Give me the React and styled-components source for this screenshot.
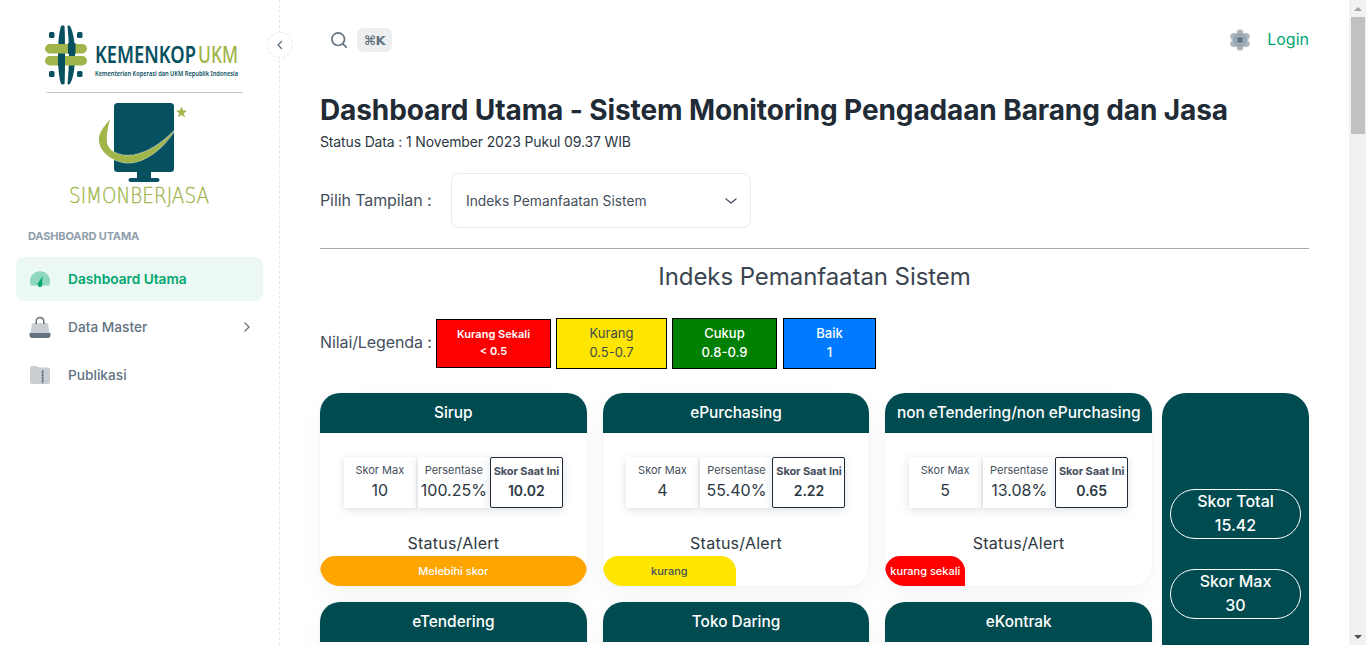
import React from "react";
import styled, { createGlobalStyle } from "styled-components";

const Global = createGlobalStyle`
  html, body { margin: 0; padding: 0; height: 100%; overflow: hidden; background: #fff; }
  body { font-family: Inter, "Noto Sans", "Liberation Sans", sans-serif; color: #212b36; }
  * { box-sizing: border-box; }
`;

const Shell = styled.div`
  height: 100vh;
  display: flex;
  overflow: hidden;
`;

const Page = styled.div`
  flex: 1;
  min-width: 0;
  display: flex;
  align-items: stretch;
  overflow: hidden;
`;

const Rail = styled.div`
  flex: 0 0 17px;
  background: #f1f1f1;
  display: flex;
  flex-direction: column;
  align-items: center;
`;

const RailButton = styled.div`
  flex: none;
  width: 17px;
  height: 17px;
  display: flex;
  align-items: center;
  justify-content: center;
`;

const RailArrow = styled.span`
  width: 0;
  height: 0;
  border-left: 4px solid transparent;
  border-right: 4px solid transparent;
  ${(p) => (p.$down ? "border-top: 4px solid #505050;" : "border-bottom: 4px solid #a3a3a3;")}
`;

const RailThumb = styled.div`
  flex: none;
  width: 14px;
  height: 117px;
  margin-left: 1px;
  background: #c1c1c1;
`;

const RailGap = styled.div`
  flex: 1;
`;

const Sidebar = styled.aside`
  position: relative;
  flex: 0 0 280px;
  border-right: 1px dashed #e4e7ea;
  padding: 23px 16px 0;
`;

const Collapse = styled.button`
  position: absolute;
  top: 32px;
  right: -14px;
  width: 26px;
  height: 26px;
  border-radius: 50%;
  border: 1px dashed #e4e7ea;
  background: #fff;
  padding: 0;
  display: flex;
  align-items: center;
  justify-content: center;
  color: #637381;
`;

const Brand = styled.div`
  display: flex;
  flex-direction: column;
  align-items: center;
  margin: 0 -16px;
`;

const BrandRule = styled.div`
  width: 196px;
  height: 1px;
  background: #c4c4c4;
  margin: 3px 0 8px;
  transform: translateX(4.5px);
`;

const BrandFoot = styled.div`
  height: 21px;
`;

const SectionLabel = styled.div`
  font-size: 11px;
  font-weight: 700;
  color: #919eab;
  text-transform: uppercase;
  margin: 0 0 13px 12px;
  line-height: 16px;
  letter-spacing: -0.15px;
`;

const NavList = styled.nav`
  display: flex;
  flex-direction: column;
  gap: 4px;
  width: 247px;
`;

const NavItem = styled.a`
  height: 44px;
  display: flex;
  align-items: center;
  border-radius: 8px;
  padding: 0 12px;
  font-size: 13.7px;
  font-weight: ${(p) => (p.$active ? 600 : 500)};
  color: ${(p) => (p.$active ? "#00a76f" : "#637381")};
  background: ${(p) => (p.$active ? "rgba(0,167,111,0.08)" : "transparent")};
  svg.icon { flex: 0 0 24px; margin-right: 16px; }
  svg.chev { margin-left: auto; margin-right: -4px; }
`;

const Main = styled.main`
  flex: 1;
  min-width: 0;
  padding: 0 40px;
`;

const TopBar = styled.header`
  height: 80px;
  display: flex;
  align-items: center;
  justify-content: space-between;
`;

const SearchGroup = styled.div`
  display: flex;
  align-items: center;
  gap: 8px;
  margin-left: 9px;
`;

const Kbd = styled.span`
  height: 24px;
  width: 35px;
  border-radius: 6px;
  background: #eceef0;
  color: #637381;
  font-size: 13px;
  font-weight: 700;
  letter-spacing: -0.5px;
  display: flex;
  align-items: center;
  justify-content: center;
  font-family: "DejaVu Sans", Inter, sans-serif;
`;

const UserGroup = styled.div`
  display: flex;
  align-items: center;
  gap: 15px;
`;

const LoginLink = styled.a`
  color: #00a76f;
  font-size: 16px;
  font-weight: 400;
  padding-bottom: 2px;
`;

const Title = styled.h1`
  margin: 14px 0 0;
  font-size: 28px;
  line-height: 32px;
  font-weight: 700;
  color: #212b36;
  letter-spacing: -0.11px;
  white-space: nowrap;
`;

const Sub = styled.p`
  margin: 6px 0 0;
  font-size: 14px;
  line-height: 20px;
  color: #2d3843;
  letter-spacing: -0.145px;
`;

const PickRow = styled.div`
  margin-top: 21px;
  display: flex;
  align-items: center;
  height: 55px;
`;

const RowLabel = styled.span`
  font-size: 16px;
  letter-spacing: -0.1px;
  color: #454f5b;
  width: ${(p) => p.$w}px;
  padding-bottom: ${(p) => p.$lift}px;
  flex: none;
  white-space: nowrap;
`;

const SelectBox = styled.div`
  width: 300px;
  height: 55px;
  border: 1px solid #e8ebee;
  border-radius: 8px;
  display: flex;
  align-items: center;
  justify-content: space-between;
  padding: 0 12px 0 14px;
  font-size: 13.8px;
  color: #454f5b;
`;

const Rule = styled.hr`
  margin: 20px 0 0;
  border: 0;
  border-top: 1px solid #a9a9a9;
`;

const SectionTitle = styled.h2`
  margin: 12px 0 0;
  text-align: center;
  font-size: 24px;
  letter-spacing: -0.07px;
  line-height: 32px;
  font-weight: 400;
  color: #3a4550;
`;

const LegendRow = styled.div`
  margin-top: 25px;
  display: flex;
  align-items: center;
  height: 51px;
`;

const LegendBox = styled.div`
  width: ${(p) => p.$w}px;
  height: ${(p) => p.$h}px;
  margin-right: ${(p) => p.$mr}px;
  border: 1px solid #000;
  background: ${(p) => p.$bg};
  color: ${(p) => p.$fg};
  font-size: ${(p) => p.$fs}px;
  font-weight: ${(p) => p.$fw};
  line-height: ${(p) => p.$lh}px;
  padding-bottom: 2px;
  text-align: center;
  display: flex;
  flex-direction: column;
  justify-content: center;
`;

const Board = styled.div`
  margin-top: 24px;
  display: flex;
  gap: 10px;
  align-items: stretch;
`;

const CardGrid = styled.div`
  flex: 0 0 832px;
  display: grid;
  grid-template-columns: repeat(3, 1fr);
  gap: 16px;
`;

const Card = styled.section`
  height: 193px;
  background: #fff;
  border-radius: 20px;
  box-shadow: 0 0 2px rgba(145,158,171,0.2), 0 12px 24px -4px rgba(145,158,171,0.12);
  display: flex;
  flex-direction: column;
  overflow: hidden;
`;

const CardHead = styled.div`
  height: 40px;
  flex: none;
  background: #004b50;
  color: #fff;
  font-size: 15.4px;
  font-weight: 500;
  padding-bottom: 2px;
  display: flex;
  align-items: center;
  justify-content: center;
  white-space: nowrap;
`;

const Stats = styled.div`
  margin: 24px auto 0;
  width: 219px;
  height: 51px;
  display: grid;
  grid-template-columns: 72px 74px 73px;
`;

const Stat = styled.div`
  background: #fff;
  box-shadow: 0 2px 8px rgba(145,158,171,0.32);
  border: ${(p) => (p.$current ? "1px solid #212b36" : "none")};
  border-radius: ${(p) => (p.$current ? "2px" : "0")};
  margin-left: ${(p) => (p.$inset ? "2px" : "0")};
  display: flex;
  flex-direction: column;
  align-items: center;
  padding-top: 5px;
  position: relative;
  white-space: nowrap;
`;

const StatLabel = styled.div`
  font-size: 11px;
  line-height: 16px;
  font-weight: ${(p) => (p.$current ? 700 : 400)};
  letter-spacing: ${(p) => (p.$current ? "-0.1px" : "0")};
  color: #454f5b;
`;

const StatValue = styled.div`
  font-size: ${(p) => (p.$current ? "14px" : "16px")};
  line-height: 24px;
  font-weight: ${(p) => (p.$current ? 600 : 400)};
  color: #2d3843;
`;

const AlertLabel = styled.div`
  margin-top: auto;
  margin-bottom: 1px;
  text-align: center;
  font-size: 16px;
  letter-spacing: 0.25px;
  line-height: 24px;
  color: #2d3843;
`;

const AlertTrack = styled.div`
  height: 30px;
  flex: none;
`;

const AlertBar = styled.div`
  height: 30px;
  border-radius: ${(p) => (p.$full ? "15px" : "15px 15px 0 15px")};
  color: ${(p) => p.$fg};
  background: ${(p) => p.$bg};
  font-size: 11px;
  font-weight: 500;
  display: flex;
  align-items: center;
  justify-content: center;
  white-space: nowrap;
`;

const Totals = styled.aside`
  flex: 1;
  background: #004b50;
  border-radius: 24px;
  padding: 96px 8px 0;
  display: flex;
  flex-direction: column;
  gap: 30px;
`;

const Pill = styled.div`
  height: 50px;
  border: 1px solid #fff;
  border-radius: 25px;
  color: #fff;
  font-size: 16px;
  font-weight: 500;
  line-height: 24px;
  padding-bottom: 2px;
  text-align: center;
  display: flex;
  flex-direction: column;
  justify-content: center;
`;

const KemenkopLogo = () => (
  <svg width="200" height="66" viewBox="40 22 200 66" aria-label="Kemenkop UKM">
    <rect x="49" y="31" width="5.500" height="6" rx="1.500" fill="#07505f" />
    <rect x="77" y="31" width="5.500" height="6" rx="1.500" fill="#07505f" />
    <rect x="49" y="70" width="5.500" height="6" rx="1.500" fill="#07505f" />
    <rect x="77" y="70" width="5.500" height="6" rx="1.500" fill="#07505f" />
    <path d="M70 25c3.500 6 5 17 5 29s-1.500 23-5 29c-1 .6-2 .6-2.500 0 .8-9 1.500-18 1.500-29s-.7-20-1.500-29c.5-.6 1.500-.6 2.500 0z" fill="#07505f" />
    <path d="M61 25c-2 6-3 17-3 29s1 23 3 29c1 .6 2.500.6 3.500 0 .5-9 .5-18 .5-29s0-20-.5-29c-1-.6-2.500-.6-3.500 0z" fill="#07505f" />
    <rect x="45" y="43" width="42" height="9.500" rx="4.700" fill="#a0b54a" />
    <rect x="68" y="42" width="7.500" height="11" fill="#07505f" />
    <rect x="45" y="55" width="42" height="9.500" rx="4.700" fill="#a0b54a" />
    <rect x="58" y="54" width="7" height="11" fill="#07505f" />
    <text x="95" y="62" fontFamily="'Noto Sans','Open Sans',sans-serif" fontSize="23" fontWeight="600" fill="#07505f" textLength="101" lengthAdjust="spacingAndGlyphs">KEMENKOP</text>
    <text x="198" y="62" fontFamily="'Noto Sans','Open Sans',sans-serif" fontSize="23" fontWeight="500" fill="#a0b54a" textLength="40" lengthAdjust="spacingAndGlyphs">UKM</text>
    <text x="95" y="75" fontFamily="'Noto Sans','Open Sans',sans-serif" fontSize="6.500" fontWeight="600" fill="#07505f" textLength="143" lengthAdjust="spacingAndGlyphs">Kementerian Koperasi dan UKM Republik Indonesia</text>
  </svg>
);

const swoosh = "M110 119C104 127 98 133 99 141C100 152 112 162 128 163C146 163 163 148 175 130C163 142 150 152 134 155C120 157 109 152 107 143C106 135 108 127 110 119z";

const SimonLogo = () => (
  <svg width="146" height="106" viewBox="67 101 146 106" aria-label="Simonberjasa">
    <rect x="114" y="103" width="60" height="69" rx="3.500" fill="#07505f" />
    <path d="M137 172h14v6h6.500a2 2 0 0 1 0 4h-27a2 2 0 0 1 0-4h6.500z" fill="#07505f" />
    <path d={swoosh} fill="#ffffff" stroke="#ffffff" strokeOpacity="0.4" strokeWidth="1.500" />
    <path d={swoosh} fill="#a0b54a" />
    <path d="M181.500 106.500l1.400 3.800 4.100.4-3.200 2.500 1.200 4-3.500-2.300-3.500 2.300 1.200-4-3.200-2.500 4.100-.4z" fill="#a0b54a" />
    <text x="69" y="203" fontFamily="'DejaVu Sans',sans-serif" fontSize="21" fontWeight="200" fill="#a0b54a" stroke="#a0b54a" strokeWidth="0.35" textLength="140" lengthAdjust="spacingAndGlyphs">SIMONBERJASA</text>
  </svg>
);

const GaugeIcon = () => (
  <svg className="icon" width="24" height="24" viewBox="0 0 24 24">
    <path d="M3 18.500A10 10 0 1 1 21 18.500z" fill="#00a76f" fillOpacity="0.4" />
    <path d="M14.700 9 14 15.300a3 3 0 0 1-.3 3.700c-.5 1.500-2.900 1.500-3.400 0a3 3 0 0 1 .6-4z" fill="#00a76f" />
  </svg>
);

const BagIcon = () => (
  <svg className="icon" width="24" height="24" viewBox="0 0 24 24">
    <path d="M8.200 9V6.300A3.800 3.800 0 0 1 12 2.500a3.800 3.800 0 0 1 3.800 3.800V9" fill="none" stroke="#637381" strokeWidth="1.500" />
    <path d="M5.600 8h12.800c.9 0 1.600.7 1.700 1.500l1.600 9.500H2.300l1.600-9.500C4 8.700 4.700 8 5.600 8z" fill="#637381" fillOpacity="0.35" />
    <path d="M1.500 18h21v2a3 3 0 0 1-3 3h-15a3 3 0 0 1-3-3z" fill="#637381" />
  </svg>
);

const ZipIcon = () => (
  <svg className="icon" width="24" height="24" viewBox="0 0 24 24">
    <path d="M2 5a2 2 0 0 1 2-2h4.500c1.500 0 2 1.500 3.500 1.500h8a2 2 0 0 1 2 2V19a2 2 0 0 1-2 2H4a2 2 0 0 1-2-2z" fill="#637381" fillOpacity="0.35" />
    <path d="M14.700 7v13.500M13.300 9h2.800M13.300 12h2.800M13.300 15h2.800M13.300 18h2.800" stroke="#637381" strokeWidth="1" fill="none" />
  </svg>
);

const GearIcon = () => (
  <svg width="24" height="24" viewBox="0 0 24 24">
    <g fill="#919eab" fillOpacity="0.75">
      <circle cx="12" cy="12" r="7" />
      <circle cx="12" cy="5" r="3.600" />
      <circle cx="12" cy="19" r="3.600" />
      <circle cx="5.900" cy="8.500" r="3.600" />
      <circle cx="18.100" cy="8.500" r="3.600" />
      <circle cx="5.900" cy="15.500" r="3.600" />
      <circle cx="18.100" cy="15.500" r="3.600" />
    </g>
    <circle cx="12" cy="12" r="3" fill="#637381" />
  </svg>
);

const cards = [
  { name: "Sirup", max: "10", pct: "100.25%", cur: "10.02", alert: "Melebihi skor", bg: "#ffa500", fg: "#fff", width: "100%" },
  { name: "ePurchasing", max: "4", pct: "55.40%", cur: "2.22", alert: "kurang", bg: "#ffe600", fg: "#454f5b", width: "50%" },
  { name: "non eTendering/non ePurchasing", max: "5", pct: "13.08%", cur: "0.65", alert: "kurang sekali", bg: "#ff0000", fg: "#fff", width: "30%" },
  { name: "eTendering" },
  { name: "Toko Daring" },
  { name: "eKontrak" },
];

const legend = [
  { a: "Kurang Sekali", b: "< 0.5", w: 115, h: 49, mr: 5, bg: "#ff0000", fg: "#fff", fs: 11, fw: 600, lh: 17 },
  { a: "Kurang", b: "0.5-0.7", w: 111, h: 51, mr: 5, bg: "#ffe600", fg: "#3f4a4f", fs: 13, fw: 400, lh: 19 },
  { a: "Cukup", b: "0.8-0.9", w: 105, h: 51, mr: 6, bg: "#008000", fg: "#fff", fs: 13, fw: 500, lh: 19 },
  { a: "Baik", b: "1", w: 93, h: 51, mr: 0, bg: "#007bff", fg: "#fff", fs: 13, fw: 500, lh: 19 },
];

export default function App() {
  return (
    <>
      <Global />
      <Shell>
        <Page>
          <Sidebar>
            <Collapse aria-label="collapse">
              <svg width="14" height="14" viewBox="0 0 14 14" fill="none" stroke="#637381" strokeWidth="1.400" strokeLinecap="round" strokeLinejoin="round">
                <path d="M8.500 3.500 5 7l3.500 3.500" />
              </svg>
            </Collapse>
            <Brand>
              <KemenkopLogo />
              <BrandRule />
              <SimonLogo />
              <BrandFoot />
            </Brand>
            <SectionLabel>Dashboard Utama</SectionLabel>
            <NavList>
              <NavItem $active><GaugeIcon />Dashboard Utama</NavItem>
              <NavItem>
                <BagIcon />Data Master
                <svg className="chev" width="16" height="16" viewBox="0 0 16 16" fill="none" stroke="#637381" strokeWidth="1.300" strokeLinecap="round" strokeLinejoin="round"><path d="m6 4 4 4-4 4" /></svg>
              </NavItem>
              <NavItem><ZipIcon />Publikasi</NavItem>
            </NavList>
          </Sidebar>
          <Main>
            <TopBar>
              <SearchGroup>
                <svg width="20" height="20" viewBox="0 0 20 20" fill="none" stroke="#637381" strokeWidth="1.700" strokeLinecap="round"><circle cx="9.200" cy="9.200" r="6.300" /><path d="m14 14 3.200 3.200" /></svg>
                <Kbd>⌘K</Kbd>
              </SearchGroup>
              <UserGroup>
                <GearIcon />
                <LoginLink>Login</LoginLink>
              </UserGroup>
            </TopBar>
            <Title>Dashboard Utama - Sistem Monitoring Pengadaan Barang dan Jasa</Title>
            <Sub>Status Data : 1 November 2023 Pukul 09.37 WIB</Sub>
            <PickRow>
              <RowLabel $w={131} $lift={2}>Pilih Tampilan :</RowLabel>
              <SelectBox>
                Indeks Pemanfaatan Sistem
                <svg width="14" height="14" viewBox="0 0 14 14" fill="none" stroke="#454f5b" strokeWidth="1.300" strokeLinecap="round" strokeLinejoin="round"><path d="m2 5 5 4 5-4" /></svg>
              </SelectBox>
            </PickRow>
            <Rule />
            <SectionTitle>Indeks Pemanfaatan Sistem</SectionTitle>
            <LegendRow>
              <RowLabel $w={116} $lift={4}>Nilai/Legenda :</RowLabel>
              {legend.map((l) => (
                <LegendBox key={l.a} $w={l.w} $h={l.h} $mr={l.mr} $bg={l.bg} $fg={l.fg} $fs={l.fs} $fw={l.fw} $lh={l.lh}>
                  <div>{l.a}</div>
                  <div>{l.b}</div>
                </LegendBox>
              ))}
            </LegendRow>
            <Board>
              <CardGrid>
                {cards.map((c) => (
                  <Card key={c.name}>
                    <CardHead>{c.name}</CardHead>
                    {c.alert && (
                      <>
                        <Stats>
                          <Stat><StatLabel>Skor Max</StatLabel><StatValue>{c.max}</StatValue></Stat>
                          <Stat $inset><StatLabel>Persentase</StatLabel><StatValue>{c.pct}</StatValue></Stat>
                          <Stat $current><StatLabel $current>Skor Saat Ini</StatLabel><StatValue $current>{c.cur}</StatValue></Stat>
                        </Stats>
                        <AlertLabel>Status/Alert</AlertLabel>
                        <AlertTrack>
                          <AlertBar $full={c.width === "100%"} $bg={c.bg} $fg={c.fg} style={{ width: c.width }}>{c.alert}</AlertBar>
                        </AlertTrack>
                      </>
                    )}
                  </Card>
                ))}
              </CardGrid>
              <Totals>
                <Pill><div>Skor Total</div><div>15.42</div></Pill>
                <Pill><div>Skor Max</div><div>30</div></Pill>
              </Totals>
            </Board>
          </Main>
        </Page>
        <Rail>
          <RailButton><RailArrow /></RailButton>
          <RailThumb />
          <RailGap />
          <RailButton><RailArrow $down /></RailButton>
        </Rail>
      </Shell>
    </>
  );
}
